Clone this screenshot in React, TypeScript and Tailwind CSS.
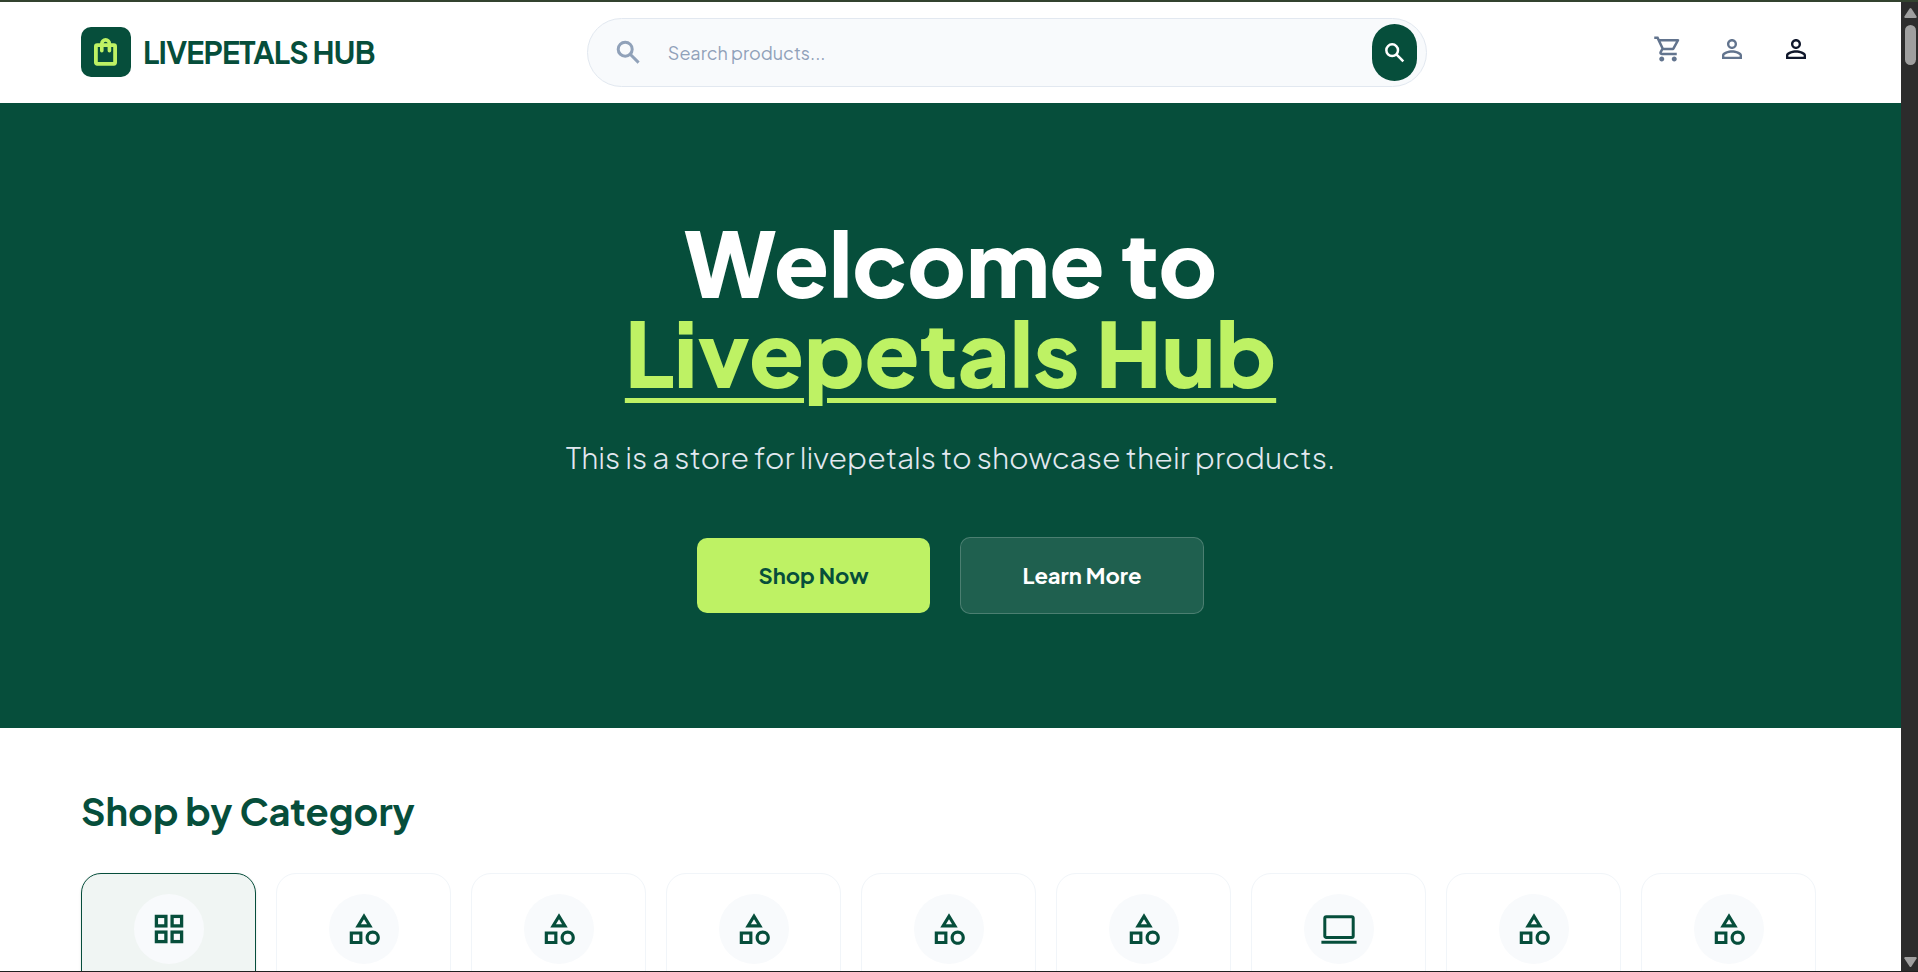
import React from "react";
import { MdOutlineShoppingCart, MdPersonOutline, MdOutlineCategory } from "react-icons/md";

type IconProps = { className?: string };

function BagIcon({ className }: IconProps) {
  return (
    <svg viewBox="0 0 30 30" fill="none" stroke="currentColor" className={className} aria-hidden="true">
      <rect x="4.9" y="8.2" width="19.2" height="18.6" rx="1.2" strokeWidth="3.8" />
      <path d="M10.8 13.8V6.7a3.8 3.8 0 0 1 7.6 0V13.8" strokeWidth="3.6" strokeLinecap="round" />
    </svg>
  );
}

function SearchIcon({ className }: IconProps) {
  return (
    <svg viewBox="0 0 30 30" fill="none" stroke="currentColor" strokeWidth="3" className={className} aria-hidden="true">
      <circle cx="12.2" cy="12.2" r="7" />
      <path d="M17 17l8.6 8.6" />
    </svg>
  );
}

function GridIcon({ className }: IconProps) {
  return (
    <svg viewBox="0 0 38 38" fill="none" stroke="currentColor" strokeWidth="3.3" className={className} aria-hidden="true">
      <rect x="6.4" y="6.4" width="9.5" height="9.5" />
      <rect x="22.1" y="6.4" width="9.5" height="9.5" />
      <rect x="6.4" y="22.1" width="9.5" height="9.5" />
      <rect x="22.1" y="22.1" width="9.5" height="9.5" />
    </svg>
  );
}

function LaptopIcon({ className }: IconProps) {
  return (
    <svg viewBox="0 0 36 36" fill="none" stroke="currentColor" strokeWidth="3" className={className} aria-hidden="true">
      <rect x="3.8" y="5.8" width="28.4" height="20.6" rx="1.5" />
      <path d="M.4 31.3h35.2" />
    </svg>
  );
}

const categories = [
  { kind: "grid", label: "All products" },
  { kind: "shapes", label: "Category 1" },
  { kind: "shapes", label: "Category 2" },
  { kind: "shapes", label: "Category 3" },
  { kind: "shapes", label: "Category 4" },
  { kind: "shapes", label: "Category 5" },
  { kind: "laptop", label: "Computers" },
  { kind: "shapes", label: "Category 6" },
  { kind: "shapes", label: "Category 7" },
];

function CategoryIcon({ kind }: { kind: string }) {
  if (kind === "grid") return <GridIcon className="size-[38px]" />;
  if (kind === "laptop") return <LaptopIcon className="size-9" />;
  return <MdOutlineCategory className="size-[38px]" />;
}

function Header() {
  return (
    <header className="flex h-[101px] shrink-0 items-center justify-between border-b border-white bg-white px-[81px]">
      <a href="#home" className="flex shrink-0 items-center gap-3">
        <span className="flex size-[50px] items-center justify-center rounded-[10px] bg-[#064e3b] text-[#bef264]">
          <BagIcon className="size-[30px]" />
        </span>
        <span className="text-[30px] font-bold tracking-tight text-[#064e3b]">LIVEPETALS HUB</span>
      </a>
      <form
        className="flex h-[69px] w-full max-w-[840px] items-center rounded-full border border-slate-200 bg-slate-50 pr-[9px] pl-[25px]"
        onSubmit={(e) => e.preventDefault()}
      >
        <SearchIcon className="size-[30px] text-slate-400" />
        <input
          type="search"
          aria-label="Search products"
          placeholder="Search products..."
          className="ml-[25px] min-w-0 flex-1 bg-transparent text-[18px] text-slate-700 outline-none placeholder:text-slate-400"
        />
        <button
          type="submit"
          aria-label="Search"
          className="flex h-[57px] w-[45px] items-center justify-center rounded-full bg-[#064e3b] text-white"
        >
          <SearchIcon className="size-[25px]" />
        </button>
      </form>
      <nav className="flex w-[181px] shrink-0 items-center justify-end gap-[34px] pr-[9px] pb-[6px] text-slate-500">
        <button type="button" aria-label="Cart">
          <MdOutlineShoppingCart className="size-[30px]" />
        </button>
        <button type="button" aria-label="Account">
          <MdPersonOutline className="size-[30px]" />
        </button>
        <button type="button" aria-label="Profile" className="text-slate-900">
          <MdPersonOutline className="size-[30px]" />
        </button>
      </nav>
    </header>
  );
}

function Hero() {
  return (
    <section className="flex shrink-0 flex-col items-center bg-[#064e3b] px-20 py-[114px] text-center">
      <h1 className="text-[90px] leading-[90px] font-extrabold text-white">
        Welcome to
        <br />
        <span className="text-[#bef264] underline decoration-[5px] underline-offset-[10px]">Livepetals Hub</span>
      </h1>
      <p className="mt-9 text-[30px] leading-[48px] font-light text-slate-200">
        This is a store for livepetals to showcase their products.
      </p>
      <div className="mt-14 flex items-center gap-[30px]">
        <button type="button" className="h-[75px] w-[233px] rounded-[10px] bg-[#bef264] text-[22px] font-bold text-[#064e3b]">
          Shop Now
        </button>
        <button
          type="button"
          className="h-[77px] w-[244px] rounded-[10px] border border-white/20 bg-white/10 text-[22px] font-bold text-white"
        >
          Learn More
        </button>
      </div>
    </section>
  );
}

function Categories() {
  return (
    <section className="bg-white px-[81px] pt-[58px]">
      <h2 className="text-[38px] leading-[50px] font-bold text-[#064e3b]">Shop by Category</h2>
      <div className="mt-[37px] flex gap-5">
        {categories.map((c, i) => (
          <button
            key={c.label}
            type="button"
            aria-label={c.label}
            className={
              i === 0
                ? "flex h-[200px] w-[175px] shrink-0 justify-center rounded-[20px] border border-[#064e3b] bg-[#f0f5f3] pt-5 text-[#064e3b] shadow-sm"
                : "flex h-[200px] w-[175px] shrink-0 justify-center rounded-[20px] border border-slate-100 bg-white pt-5 text-[#064e3b]"
            }
          >
            <span className="flex size-[70px] items-center justify-center rounded-full bg-slate-50">
              <CategoryIcon kind={c.kind} />
            </span>
          </button>
        ))}
      </div>
    </section>
  );
}

function ScrollTrack() {
  return (
    <div
      className="flex w-[17px] shrink-0 flex-col items-center justify-between bg-[#2c2c2c] pl-[2px] text-[#9f9f9f]"
      aria-hidden="true"
    >
      <div className="flex flex-col items-center gap-[7px] pt-[6px]">
        <svg viewBox="0 0 13 10" className="h-[10px] w-[13px]" fill="currentColor">
          <path d="M5.6.6Q6.5-.4 7.4.6L12.6 8.4Q13 10 11.6 10H1.4Q0 10 .4 8.4Z" />
        </svg>
        <div className="h-10 w-[11px] rounded-full bg-[#9f9f9f]" />
      </div>
      <svg viewBox="0 0 13 10" className="mb-1 h-[10px] w-[13px]" fill="currentColor">
        <path d="M5.6 9.4Q6.5 10.4 7.4 9.4L12.6 1.6Q13 0 11.6 0H1.4Q0 0 .4 1.6Z" />
      </svg>
    </div>
  );
}

export default function App() {
  return (
    <div className="flex h-screen flex-col overflow-hidden border-t-2 border-b border-t-[#33432f] border-b-[#202020] bg-white font-['Plus_Jakarta_Sans','Inter',sans-serif]">
      <div className="flex min-h-0 flex-1">
        <main className="flex min-w-0 flex-1 flex-col overflow-hidden">
          <Header />
          <Hero />
          <Categories />
        </main>
        <ScrollTrack />
      </div>
    </div>
  );
}
